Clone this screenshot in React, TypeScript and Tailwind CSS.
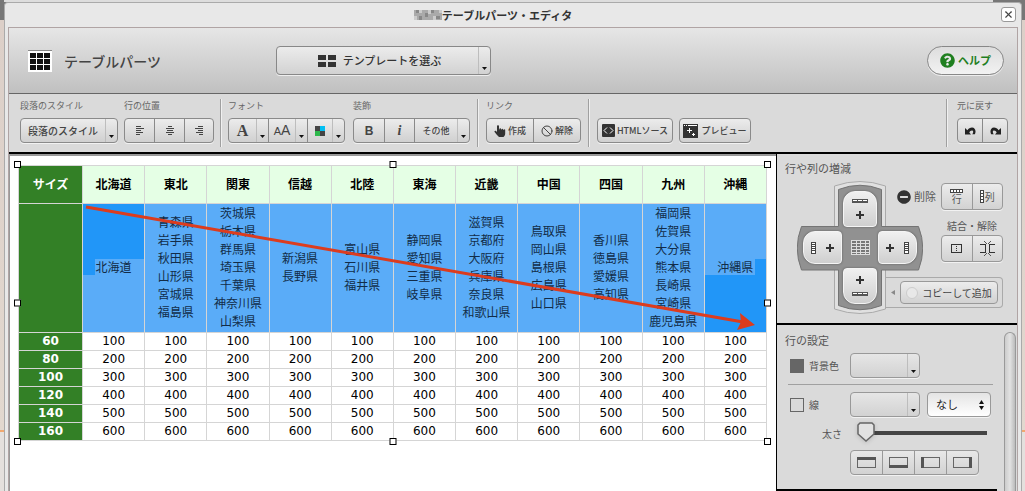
import { useState } from "react";
import type { ReactNode } from "react";
import { FaMinusCircle, FaQuestionCircle } from "react-icons/fa";
import { Ban, X } from "lucide-react";

const columns = [
  { name: "北海道", items: ["北海道"] },
  { name: "東北", items: ["青森県", "岩手県", "秋田県", "山形県", "宮城県", "福島県"] },
  { name: "関東", items: ["茨城県", "栃木県", "群馬県", "埼玉県", "千葉県", "神奈川県", "山梨県"] },
  { name: "信越", items: ["新潟県", "長野県"] },
  { name: "北陸", items: ["富山県", "石川県", "福井県"] },
  { name: "東海", items: ["静岡県", "愛知県", "三重県", "岐阜県"] },
  { name: "近畿", items: ["滋賀県", "京都府", "大阪府", "兵庫県", "奈良県", "和歌山県"] },
  { name: "中国", items: ["鳥取県", "岡山県", "島根県", "広島県", "山口県"] },
  { name: "四国", items: ["香川県", "徳島県", "愛媛県", "高知県"] },
  { name: "九州", items: ["福岡県", "佐賀県", "大分県", "熊本県", "長崎県", "宮崎県", "鹿児島県"] },
  { name: "沖縄", items: ["沖縄県"] },
];

const rates = [
  { size: 60, price: 100 },
  { size: 80, price: 200 },
  { size: 100, price: 300 },
  { size: 120, price: 400 },
  { size: 140, price: 500 },
  { size: 160, price: 600 },
];

const handles = [
  "-top-1 -left-1",
  "-top-1 left-1/2 -translate-x-1/2",
  "-top-1 -right-1",
  "top-1/2 -left-1 -translate-y-1/2",
  "top-1/2 -right-1 -translate-y-1/2",
  "-bottom-1 -left-1",
  "-bottom-1 left-1/2 -translate-x-1/2",
  "-bottom-1 -right-1",
];

function Caret() {
  return (
    <span className="flex h-full w-3 items-end justify-center border-l border-[#bdbdbd] pb-1">
      <svg width="5" height="3" viewBox="0 0 5 3">
        <path d="M0 0h5L2.5 3z" fill="#111" />
      </svg>
    </span>
  );
}

function ButtonGroup({ children }: { children: ReactNode }) {
  return (
    <div className="flex h-[25px] divide-x divide-[#8a8a8a] overflow-hidden rounded border border-[#8a8a8a] bg-linear-to-b from-[#ececec] to-[#d0d0d0] text-[#444] shadow-[0_1px_0_#f2f2f2]">
      {children}
    </div>
  );
}

function ToolGroup({ label, children }: { label: string; children: ReactNode }) {
  return (
    <div className="flex flex-col gap-[6px] pt-px pb-1">
      <span className="h-3 text-[9px] leading-3 whitespace-nowrap text-[#666]">{label}</span>
      {children}
    </div>
  );
}

function Separator() {
  return <div className="w-0.5 border-r border-l border-r-[#f0f0f0] border-l-[#a0a0a0]" />;
}

function AlignIcon({ d }: { d: string }) {
  return (
    <svg width="10" height="10" viewBox="0 0 10 10" shapeRendering="crispEdges">
      <path d={d} stroke="#444" fill="none" />
    </svg>
  );
}

function HandIcon() {
  return (
    <svg width="12" height="12" viewBox="0 0 12 12">
      <path
        d="M3 1.200C3-.1 5-.1 5 1.200V4.500H5.400V3.800C5.700 3 6.900 3 7.100 3.800V4.700H7.500V4.200C7.800 3.500 8.900 3.500 9.100 4.200V5H9.500V4.700C9.800 4 11 4 11.200 4.800V8.500C11.200 10 10.500 11 9.500 12H5C3.500 10.500 2 9 .6 7 0 6 1.200 5.200 2 6L3 7z"
        fill="#333"
      />
    </svg>
  );
}

function PadButton({ label, className, children }: { label: string; className: string; children: ReactNode }) {
  return (
    <button
      aria-label={label}
      className={`flex items-center justify-center border border-[#f4f4f4] bg-linear-to-b from-[#f0f0f0] to-[#cfcfcf] shadow-[0_0_2px_#555] ${className}`}
    >
      {children}
    </button>
  );
}

function Plus() {
  return (
    <svg width="8" height="8" viewBox="0 0 8 8">
      <path d="M4 0v8M0 4h8" stroke="#333" strokeWidth="2" />
    </svg>
  );
}

function RowStrip() {
  return (
    <svg width="16" height="4" viewBox="0 0 16 4" shapeRendering="crispEdges">
      <path d="M0 0h16v4H0z" fill="#555" />
      <path d="M1 1h4v1H1zM6 1h4v1H6zM11 1h4v1h-4z" fill="#fff" />
    </svg>
  );
}

function ColStrip() {
  return (
    <svg width="5" height="12" viewBox="0 0 5 12" shapeRendering="crispEdges">
      <path d="M.5.5h4v11h-4zM.5 2.5h4M.5 4.5h4M.5 6.5h4M.5 8.5h4" stroke="#444" fill="#fff" />
    </svg>
  );
}

function BorderIcon({ d }: { d: string }) {
  return (
    <svg width="19" height="11" viewBox="0 0 19 11" shapeRendering="crispEdges">
      <path d="M.5.5h18v10H.5z" stroke="#666" fill="none" />
      <path d={d} fill="#555" />
    </svg>
  );
}

function TitleBar() {
  return (
    <div className="relative flex h-6 items-center justify-center pr-10">
      <h1 className="flex items-center text-[11px] font-bold text-[#333]">
        <svg width="28" height="10" viewBox="0 0 28 10" shapeRendering="crispEdges">
          <path d="M0 0h28v10H0z" fill="#aaa" />
          <path d="M2 0h3v3H2zM11 3h3v4h-3zM17 0h3v3h-3zM22 6h4v3h-4zM5 6h3v4H5z" fill="#888" />
          <path d="M5 0h3v3H5zM14 0h3v4h-3zM0 6h3v4H0zM19 6h3v4h-3zM25 0h3v3h-3z" fill="#ccc" />
        </svg>
        テーブルパーツ・エディタ
      </h1>
      <button
        aria-label="閉じる"
        className="absolute top-1 right-0.5 flex size-[15px] items-center justify-center rounded-[3px] border border-[#999] bg-white"
      >
        <X size={11} color="#444" strokeWidth={2.5} />
      </button>
    </div>
  );
}

function Header() {
  return (
    <header className="flex h-[66px] items-center border-b border-[#666] bg-linear-to-b from-[#e6e6e6] to-[#c0c0c0] pr-[13px] pl-[19px]">
      <div className="flex w-[248px] items-center gap-3">
        <svg width="24" height="22" viewBox="0 0 24 22" shapeRendering="crispEdges">
          <path d="M0 0h24v22H0z" fill="#fff" />
          <path d="M0 0h24v1H0z" fill="#888" />
          <path
            d="M2 3h6v5H2zM9 3h6v5H9zM16 3h6v5h-6zM2 9h6v5H2zM9 9h6v5H9zM16 9h6v5h-6zM2 15h6v5H2zM9 15h6v5H9zM16 15h6v5h-6z"
            fill="#111"
          />
        </svg>
        <h2 className="text-sm leading-4 font-medium text-[#444]">テーブルパーツ</h2>
      </div>
      <button className="flex h-[29px] w-[215px] items-stretch rounded border border-[#888] bg-linear-to-b from-[#ececec] to-[#d2d2d2] text-[11px] font-medium text-[#333] shadow-[0_1px_0_#eee]">
        <span className="flex flex-1 items-center justify-center gap-[7px] pl-1">
          <svg width="18" height="12" viewBox="0 0 18 12" shapeRendering="crispEdges">
            <path d="M0 0h8v5H0zM10 0h8v5h-8zM0 7h8v5H0zM10 7h8v5h-8z" fill="#333" />
          </svg>
          テンプレートを選ぶ
        </span>
        <Caret />
      </button>
      <button className="ml-auto flex h-[29px] w-[77px] items-center justify-center gap-[3px] rounded-full border border-[#888] bg-linear-to-b from-[#ddd] to-[#f2f2f2] text-[11px] font-bold text-[#1f7f1f] shadow-[0_1px_0_#eee]">
        <FaQuestionCircle size={15} />
        ヘルプ
      </button>
    </header>
  );
}

function Toolbar() {
  return (
    <div className="flex gap-[6px] border-b-2 border-black bg-[#dadada] py-[5px] pr-[9px] pl-[11px]">
      <ToolGroup label="段落のスタイル">
        <ButtonGroup>
          <button className="flex w-24 items-center text-[10px] font-medium">
            <span className="flex-1">段落のスタイル</span>
            <Caret />
          </button>
        </ButtonGroup>
      </ToolGroup>
      <ToolGroup label="行の位置">
        <ButtonGroup>
          <button aria-label="左揃え" className="flex w-[30px] items-center justify-center">
            <AlignIcon d="M1 .5h5M1 2.5h8M1 4.5h5M1 6.5h7M1 8.5h4" />
          </button>
          <button aria-label="中央揃え" className="flex w-[30px] items-center justify-center">
            <AlignIcon d="M3 .5h4M1 2.5h8M2 4.5h6M1 6.5h8M3 8.5h4" />
          </button>
          <button aria-label="右揃え" className="flex w-7 items-center justify-center">
            <AlignIcon d="M4 .5h5M1 2.5h8M4 4.5h5M2 6.5h7M5 8.5h4" />
          </button>
        </ButtonGroup>
      </ToolGroup>
      <Separator />
      <ToolGroup label="フォント">
        <ButtonGroup>
          <button aria-label="書体" className="flex w-10 items-center">
            <span className="flex-1 font-['Liberation_Serif',serif] text-base leading-4 font-bold">A</span>
            <Caret />
          </button>
          <button aria-label="文字サイズ" className="flex w-[39px] items-center font-['Liberation_Sans',sans-serif]">
            <span className="flex-1 text-sm leading-4">
              <span className="text-[11px]">A</span>A
            </span>
            <Caret />
          </button>
          <button aria-label="文字色" className="flex w-9 items-center">
            <span className="flex flex-1 justify-center">
              <svg width="10" height="10" viewBox="0 0 10 10" shapeRendering="crispEdges">
                <path d="M0 0h5v5H0zM5 5h5v5H5z" fill="#444" />
                <path d="M5 0h5v5H5z" fill="#00bff3" />
                <path d="M0 5h5v5H0z" fill="#2db84b" />
              </svg>
            </span>
            <Caret />
          </button>
        </ButtonGroup>
      </ToolGroup>
      <div className="ml-0.5 flex">
        <ToolGroup label="装飾">
          <ButtonGroup>
            <button
              aria-label="太字"
              className="w-[31px] font-['Liberation_Sans',sans-serif] text-xs leading-4 font-bold"
            >
              B
            </button>
            <button
              aria-label="斜体"
              className="w-[30px] font-['Liberation_Serif',serif] text-sm leading-4 font-bold italic"
            >
              i
            </button>
            <button className="flex w-[54px] items-center text-[9px] font-medium">
              <span className="flex-1">その他</span>
              <Caret />
            </button>
          </ButtonGroup>
        </ToolGroup>
      </div>
      <div className="ml-px flex gap-[7px]">
        <Separator />
        <ToolGroup label="リンク">
          <ButtonGroup>
            <button className="flex w-[47px] items-center justify-center gap-0.5 text-[9px] font-medium">
              <HandIcon />
              作成
            </button>
            <button className="flex w-[46px] items-center justify-center gap-0.5 text-[9px] font-medium">
              <Ban size={12} />
              解除
            </button>
          </ButtonGroup>
        </ToolGroup>
        <Separator />
        <div className="flex items-end gap-[6px] pb-1">
          <ButtonGroup>
            <button className="flex w-[74px] items-center justify-center gap-0.5 text-[9px] font-medium whitespace-nowrap">
              <svg width="13" height="13" viewBox="0 0 13 13">
                <rect width="13" height="13" rx="1" fill="#333" />
                <path d="M5 3.5 2 6.5l3 3M8 3.5l3 3-3 3" stroke="#fff" fill="none" />
              </svg>
              HTMLソース
            </button>
          </ButtonGroup>
          <ButtonGroup>
            <button className="flex w-[70px] items-center justify-center gap-[3px] text-[9px] font-medium whitespace-nowrap">
              <svg width="15" height="14" viewBox="0 0 15 14" shapeRendering="crispEdges">
                <path d="M0 0h15v14H0z" fill="#333" />
                <path d="M1 1.5h1M3 1.5h1M5 1.5h9M4 6.5h5M6.5 4v5M9 10.5h3M10.5 9v3" stroke="#fff" />
              </svg>
              プレビュー
            </button>
          </ButtonGroup>
        </div>
      </div>
      <div className="ml-auto flex gap-[9px]">
        <Separator />
        <ToolGroup label="元に戻す">
          <ButtonGroup>
            <button aria-label="元に戻す" className="flex w-[25px] items-center justify-center">
              <svg width="11" height="8" viewBox="0 0 11 8">
                <path
                  d="M0 1v6.500H6L4.300 5.600C5 3.500 8 2.800 8.200 4.800c.1 1-.4 1.700-1 2.500h2.700C11.500 4 10 .6 7 .6 5.200.6 3.500 1.400 2.400 3.200z"
                  fill="#222"
                />
              </svg>
            </button>
            <button aria-label="やり直す" className="flex w-[24px] items-center justify-center">
              <svg width="11" height="8" viewBox="0 0 11 8">
                <path
                  d="M11 1v6.500H5l1.700-1.900C6 3.500 3 2.800 2.800 4.800c-.1 1 .4 1.700 1 2.500H1.100C-.5 4 1 .6 4 .6c1.800 0 3.500.8 4.600 2.600z"
                  fill="#222"
                />
              </svg>
            </button>
          </ButtonGroup>
        </ToolGroup>
      </div>
    </div>
  );
}

function RegionCell({ items, first, last }: { items: string[]; first: boolean; last: boolean }) {
  return (
    <td className="relative h-[129px] border border-[#d5d5d5] bg-[#5aacf8] p-0">
      {first && (
        <>
          <div className="absolute inset-x-0 top-0 h-[55px] bg-[#2196f8]" />
          <div className="absolute top-[55px] left-0 h-4 w-3 bg-[#2196f8]" />
        </>
      )}
      {last && (
        <>
          <div className="absolute inset-x-0 top-[71px] bottom-0 bg-[#2196f8]" />
          <div className="absolute top-[55px] right-0 h-4 w-[11px] bg-[#2196f8]" />
        </>
      )}
      <div className="relative">
        {items.map((item) => (
          <div key={item}>{item}</div>
        ))}
      </div>
    </td>
  );
}

function Editor() {
  return (
    <main className="min-w-0 flex-1 border-t-2 border-l border-[#999] bg-white pt-[9px] pr-[9px] pl-2">
      <div className="relative">
        <table className="w-full table-fixed border-collapse text-center font-['DejaVu_Sans','Noto_Sans_CJK_JP',sans-serif] text-xs leading-[18px] text-black">
          <thead>
            <tr>
              <th className="h-[38px] w-16 border border-[#d5d5d5] bg-[#338026] p-0 text-white">サイズ</th>
              {columns.map((col) => (
                <th key={col.name} className="border border-[#d5d5d5] bg-[#e5ffe5] p-0">
                  {col.name}
                </th>
              ))}
            </tr>
          </thead>
          <tbody>
            <tr className="text-[#122c48]">
              <th className="border border-[#d5d5d5] bg-[#338026] p-0" />
              {columns.map((col, i) => (
                <RegionCell
                  key={col.name}
                  items={col.items}
                  first={i === 0}
                  last={i === columns.length - 1}
                />
              ))}
            </tr>
            {rates.map((rate) => (
              <tr key={rate.size} className="leading-[17px]">
                <th className="border border-[#d5d5d5] bg-[#338026] p-0 text-white">{rate.size}</th>
                {columns.map((col) => (
                  <td key={col.name} className="border border-[#d5d5d5] p-0">
                    {rate.price}
                  </td>
                ))}
              </tr>
            ))}
          </tbody>
        </table>
        <svg
          className="pointer-events-none absolute inset-0 h-full w-full"
          viewBox="0 0 749 276"
          preserveAspectRatio="none"
        >
          <path d="M68 42 725 157" stroke="#dc3c1e" strokeWidth="3" />
          <path d="m737 160-18 5 4-8-1-9z" fill="#dc3c1e" />
        </svg>
        {handles.map((pos) => (
          <span key={pos} className={`absolute size-[7px] border border-black bg-white ${pos}`} />
        ))}
      </div>
    </main>
  );
}

function RowColumnPanel() {
  return (
    <section className="border-b-2 border-black pt-[6px] pr-[14px] pb-[9px] pl-2">
      <h3 className="text-[11px] leading-4 text-[#555]">行や列の増減</h3>
      <div className="mt-[5px] flex pl-3">
        <div className="relative grid h-[133px] w-[126px] shrink-0 grid-cols-[39px_34px_39px] grid-rows-[36px_33px_36px] gap-x-px gap-y-1 px-[6px] py-[10px]">
          <svg className="absolute inset-0" width="126" height="133" viewBox="0 0 126 133">
            <path
              d="M37.500 60V5Q63-4 88.500 5V128Q63 137 37.500 128z"
              fill="#e0e0e0"
              stroke="#aaa"
            />
            <path
              d="M41.500 45.500V8.500Q63 0 84.500 8.500V45.500H121.500Q130 67 121.500 89H84.500V124.500Q63 133 41.500 124.500V89H4.500Q-4 67 4.500 45.500z"
              fill="#919191"
              stroke="#747474"
            />
          </svg>
          <PadButton label="上に行を追加" className="relative col-start-2 row-start-1 flex-col gap-2 rounded-t-xl rounded-b">
            <RowStrip />
            <Plus />
          </PadButton>
          <PadButton label="左に列を追加" className="relative col-start-1 row-start-2 gap-[10px] rounded-l-xl rounded-r">
            <ColStrip />
            <Plus />
          </PadButton>
          <div className="relative col-start-2 row-start-2 flex items-center justify-center">
            <svg width="19" height="15" viewBox="0 0 19 15" shapeRendering="crispEdges">
              <path
                d="M.5.5h18v14H.5zM5.500.5v14M9.500.5v14M14.500.5v14M.5 3.500h18M.5 6.500h18M.5 9.500h18M.5 12.500h18"
                stroke="#ddd"
                fill="#777"
              />
            </svg>
          </div>
          <PadButton label="右に列を追加" className="relative col-start-3 row-start-2 gap-[10px] rounded-l rounded-r-xl">
            <Plus />
            <ColStrip />
          </PadButton>
          <PadButton label="下に行を追加" className="relative col-start-2 row-start-3 flex-col gap-2 rounded-t rounded-b-xl">
            <Plus />
            <RowStrip />
          </PadButton>
        </div>
        <div className="-ml-[38px] flex flex-1 flex-col items-end pt-0.5 text-[#555]">
          <div className="flex h-[27px] items-center gap-[3px]">
            <FaMinusCircle size={14} color="#333" />
            <span className="text-[11px]">削除</span>
            <div className="ml-0.5 flex h-[27px] w-[62px] divide-x divide-[#999] rounded border border-[#999] bg-linear-to-b from-[#ececec] to-[#d2d2d2] text-[10px] leading-3 shadow-[0_1px_0_#f2f2f2]">
              <button className="flex flex-1 flex-col items-center justify-center">
                <svg width="13" height="4" viewBox="0 0 13 4" shapeRendering="crispEdges">
                  <path d="M.5.5h12v3H.5zM3.500.5v3M6.500.5v3M9.500.5v3" stroke="#444" fill="#fff" />
                </svg>
                行
              </button>
              <button className="flex flex-1 items-center justify-center gap-px">
                <svg width="4" height="13" viewBox="0 0 4 13" shapeRendering="crispEdges">
                  <path d="M.5.5h3v12h-3zM.5 3.500h3M.5 6.500h3M.5 9.500h3" stroke="#444" fill="#fff" />
                </svg>
                列
              </button>
            </div>
          </div>
          <span className="mt-2 w-[62px] text-center text-[10px] leading-4">結合・解除</span>
          <div className="mt-px flex h-[27px] w-[62px] divide-x divide-[#999] rounded border border-[#999] bg-linear-to-b from-[#ececec] to-[#d2d2d2] shadow-[0_1px_0_#f2f2f2]">
            <button aria-label="結合" className="flex flex-1 items-center justify-center">
              <svg width="11" height="9" viewBox="0 0 11 9" shapeRendering="crispEdges">
                <path d="M.5.5h10v8H.5z" stroke="#333" fill="none" />
                <path d="M5.500 2v5" stroke="#333" strokeDasharray="1 1" />
              </svg>
            </button>
            <button aria-label="解除" className="flex flex-1 items-center justify-center">
              <svg width="15" height="15" viewBox="0 0 15 15" shapeRendering="crispEdges">
                <path d="M0 3.500h5.500v8H0M15 3.500H9.500v8H15" stroke="#333" fill="none" />
                <path
                  d="M4 .5h1M5 1.500h1M6 2.500h1M10 .5h1M9 1.500h1M8 2.500h1M4 14.500h1M5 13.500h1M6 12.500h1M10 14.500h1M9 13.500h1M8 12.500h1"
                  stroke="#555"
                />
              </svg>
            </button>
          </div>
          <div className="mt-[15px] flex h-[31px] w-full items-center justify-between rounded-r border border-l-0 border-[#aaa] pr-1 pl-[6px]">
            <svg width="4" height="5" viewBox="0 0 4 5">
              <path d="M4 0v5L0 2.500z" fill="#888" />
            </svg>
            <button className="flex h-[23px] w-[98px] items-center justify-center gap-1 rounded border border-[#999] bg-linear-to-b from-[#ececec] to-[#d2d2d2] text-[10px] whitespace-nowrap text-[#444]">
              <span className="size-3 shrink-0 rounded-full border border-[#ccc] bg-[#e8e8e8]" />
              コピーして追加
            </button>
          </div>
        </div>
      </div>
    </section>
  );
}

function ColorButton({ label }: { label: string }) {
  return (
    <button
      aria-label={label}
      className="flex h-[25px] w-[70px] justify-end rounded border border-[#999] bg-linear-to-b from-[#e6e6e6] to-[#d2d2d2] shadow-[0_1px_0_#f2f2f2]"
    >
      <Caret />
    </button>
  );
}

function RowSettingsPanel() {
  const [width, setWidth] = useState(0);

  return (
    <section className="flex flex-1 gap-[7px] pr-px">
      <div className="flex-1 text-[10px] text-[#555]">
        <div className="border-b-2 border-black pt-[7px] pb-[14px] pl-2">
          <h3 className="text-[11px] leading-4">行の設定</h3>
          <div className="mt-[5px] flex h-[25px] items-center pl-[5px]">
            <label className="flex w-[60px] items-center gap-[5px]">
              <input
                type="checkbox"
                defaultChecked
                className="size-[14px] appearance-none border border-[#666] checked:bg-[#666]"
              />
              背景色
            </label>
            <ColorButton label="背景色を選ぶ" />
          </div>
          <hr className="mt-[6px] mr-1 ml-[3px] border-[#a0a0a0]" />
          <div className="mt-[7px] flex h-[25px] items-center pl-[5px]">
            <label className="flex w-[60px] items-center gap-[5px]">
              <input
                type="checkbox"
                className="size-[14px] appearance-none border border-[#666] checked:bg-[#666]"
              />
              線
            </label>
            <ColorButton label="線の色を選ぶ" />
            <div className="relative ml-[7px]">
              <select
                aria-label="線の種類"
                className="h-[25px] w-16 appearance-none rounded border border-[#999] bg-linear-to-b from-[#e4e4e4] to-white pl-2 text-[11px] text-[#222] shadow-[0_1px_0_#f2f2f2]"
              >
                <option>なし</option>
                <option>実線</option>
                <option>点線</option>
              </select>
              <svg
                className="pointer-events-none absolute top-2 right-[7px]"
                width="5"
                height="10"
                viewBox="0 0 5 10"
              >
                <path d="M0 4h5L2.500 0zM0 6h5L2.500 10z" fill="#111" />
              </svg>
            </div>
          </div>
          <div className="mt-[5px] flex h-[22px] items-center pl-[37px]">
            <label htmlFor="line-width" className="w-[35px]">
              太さ
            </label>
            <div className="relative flex h-[22px] w-[130px] items-center">
              <input
                id="line-width"
                type="range"
                min={0}
                max={20}
                value={width}
                onChange={(e) => setWidth(Number(e.target.value))}
                className="ml-1 h-1 w-full appearance-none bg-[#444] [&::-webkit-slider-thumb]:size-4 [&::-webkit-slider-thumb]:appearance-none [&::-webkit-slider-thumb]:opacity-0"
              />
              <svg
                className="pointer-events-none absolute top-0 drop-shadow-sm"
                style={{ left: `${width * 4}%` }}
                width="18"
                height="20"
                viewBox="0 0 18 20"
              >
                <path d="M3 1h12l2 2v9l-8 7-8-7V3z" fill="#e2e2e2" stroke="#666" strokeWidth="1.500" />
              </svg>
            </div>
          </div>
          <div className="mt-[6px] ml-[65px] flex h-[25px] w-[129px] divide-x divide-[#999] rounded border border-[#999] bg-linear-to-b from-[#e8e8e8] to-[#d2d2d2] shadow-[0_1px_0_#f2f2f2]">
            <button aria-label="上線" className="flex flex-1 items-center justify-center">
              <BorderIcon d="M0 0h19v3H0z" />
            </button>
            <button aria-label="下線" className="flex flex-1 items-center justify-center">
              <BorderIcon d="M0 8h19v3H0z" />
            </button>
            <button aria-label="左線" className="flex flex-1 items-center justify-center">
              <BorderIcon d="M0 0h3v11H0z" />
            </button>
            <button aria-label="右線" className="flex flex-1 items-center justify-center">
              <BorderIcon d="M16 0h3v11h-3z" />
            </button>
          </div>
        </div>
      </div>
      <div className="mt-[7px] w-3 rounded-t-full border border-b-0 border-[#999] bg-linear-to-r from-[#ccc] via-[#e2e2e2] to-[#bbb]" />
    </section>
  );
}

export default function App() {
  return (
    <div className="flex min-h-screen flex-col bg-[linear-gradient(#777_20px,#dccfc8_20px,#e2d8cf_430px,#f0a870_430px,#f0a870_432px,#e4e0dd_432px)] font-['Noto_Sans_CJK_JP',sans-serif]">
      <div className="mr-8 ml-1 h-0.5 bg-[#ddd]" />
      <div className="mr-[3px] ml-1 flex flex-1 flex-col rounded-t border border-b-0 border-[#aaa] bg-[#e8e8e8] px-[3px]">
        <TitleBar />
        <div className="flex flex-1 flex-col border border-b-0 border-[#b0a4a4]">
          <Header />
          <Toolbar />
          <div className="flex flex-1">
            <Editor />
            <aside className="flex w-[241px] shrink-0 flex-col border-l border-black bg-[#dadada]">
              <RowColumnPanel />
              <RowSettingsPanel />
            </aside>
          </div>
        </div>
      </div>
    </div>
  );
}
